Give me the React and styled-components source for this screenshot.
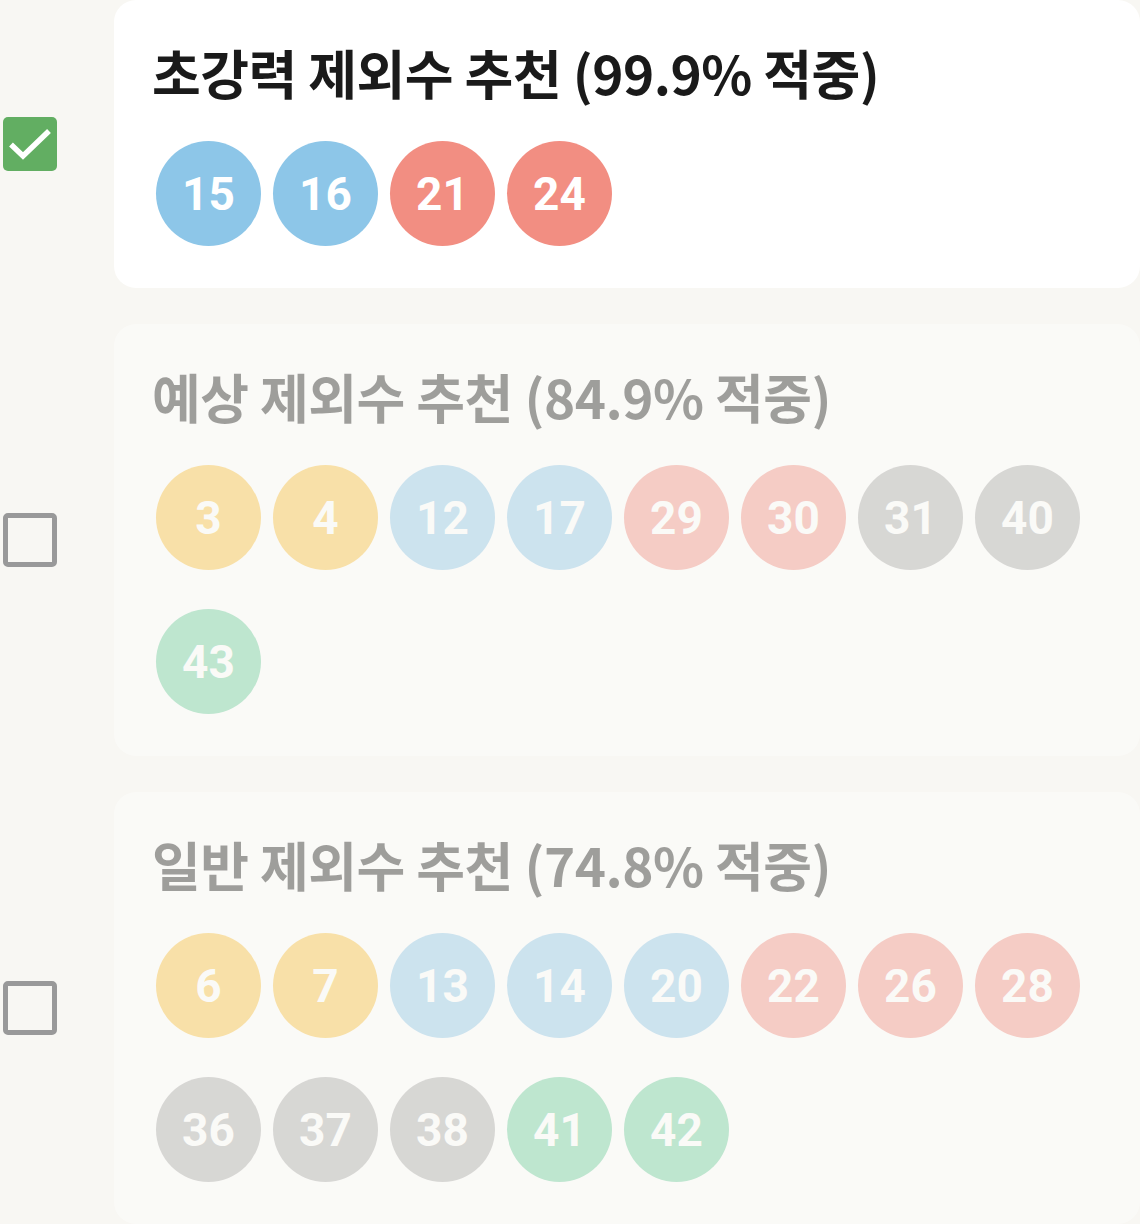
import styled, { createGlobalStyle } from 'styled-components';

const GlobalStyle = createGlobalStyle`
    html, body {
        margin: 0;
        padding: 0;
        background: #f8f7f3;
    }
    body {
        font-family: 'Noto Sans CJK KR', 'Noto Sans', sans-serif;
    }
`;

const groups = [
    {
        title: '초강력 제외수 추천 (99.9% 적중)',
        checked: true,
        numbers: [15, 16, 21, 24],
    },
    {
        title: '예상 제외수 추천 (84.9% 적중)',
        checked: false,
        numbers: [3, 4, 12, 17, 29, 30, 31, 40, 43],
    },
    {
        title: '일반 제외수 추천 (74.8% 적중)',
        checked: false,
        numbers: [6, 7, 13, 14, 20, 22, 26, 28, 36, 37, 38, 41, 42],
    },
];

function ballColor(n) {
    if (n <= 10) return '#fac039';
    if (n <= 20) return '#8dc6e8';
    if (n <= 30) return '#f28e82';
    if (n <= 40) return '#a8a8a8';
    return '#69cd9b';
}

function CheckBox({ checked }) {
    return (
        <Box $checked={checked}>
            {checked && (
                <svg width="54" height="54" viewBox="0 0 54 54" fill="none">
                    <path d="M8 27.5L20 39L46 14" stroke="#fff" strokeWidth="5.5" />
                </svg>
            )}
        </Box>
    );
}

function App() {
    return (
        <>
            <GlobalStyle />
            <List>
                {groups.map((g) => (
                    <Row key={g.title}>
                        <CheckCol>
                            <CheckBox checked={g.checked} />
                        </CheckCol>
                        <Card $active={g.checked}>
                            <Title>{g.title}</Title>
                            <Balls>
                                {g.numbers.map((n) => (
                                    <Ball key={n} $color={ballColor(n)}>{n}</Ball>
                                ))}
                            </Balls>
                        </Card>
                    </Row>
                ))}
            </List>
        </>
    );
}

const List = styled.div`
    display: flex;
    flex-direction: column;
    gap: 36px;
    width: 1140px;
`;

const Row = styled.div`
    display: flex;
    align-items: center;
`;

const CheckCol = styled.div`
    width: 114px;
    flex-shrink: 0;
    padding-left: 3px;
    box-sizing: border-box;
`;

const Box = styled.div`
    width: 54px;
    height: 54px;
    box-sizing: border-box;
    border-radius: 5px;
    display: flex;
    align-items: center;
    justify-content: center;
    background: ${(p) => (p.$checked ? '#62ae62' : 'transparent')};
    border: ${(p) => (p.$checked ? 'none' : '5px solid #999999')};
`;

const Card = styled.div`
    flex: 1;
    background: #ffffff;
    border-radius: 22px;
    padding: 32px 40px 42px 38px;
    opacity: ${(p) => (p.$active ? 1 : 0.4)};
`;

const Title = styled.div`
    font-size: 53px;
    font-weight: 700;
    color: #1a1a1a;
    line-height: 80px;
    letter-spacing: -0.5px;
    margin-bottom: 29px;
`;

const Balls = styled.div`
    display: flex;
    flex-wrap: wrap;
    column-gap: 12px;
    row-gap: 39px;
    padding-left: 4px;
`;

const Ball = styled.div`
    width: 105px;
    height: 105px;
    border-radius: 50%;
    background: ${(p) => p.$color};
    color: #ffffff;
    font-family: 'Roboto', 'Liberation Sans', sans-serif;
    font-weight: 700;
    font-size: 46px;
    display: flex;
    align-items: center;
    justify-content: center;
`;

export default App;
